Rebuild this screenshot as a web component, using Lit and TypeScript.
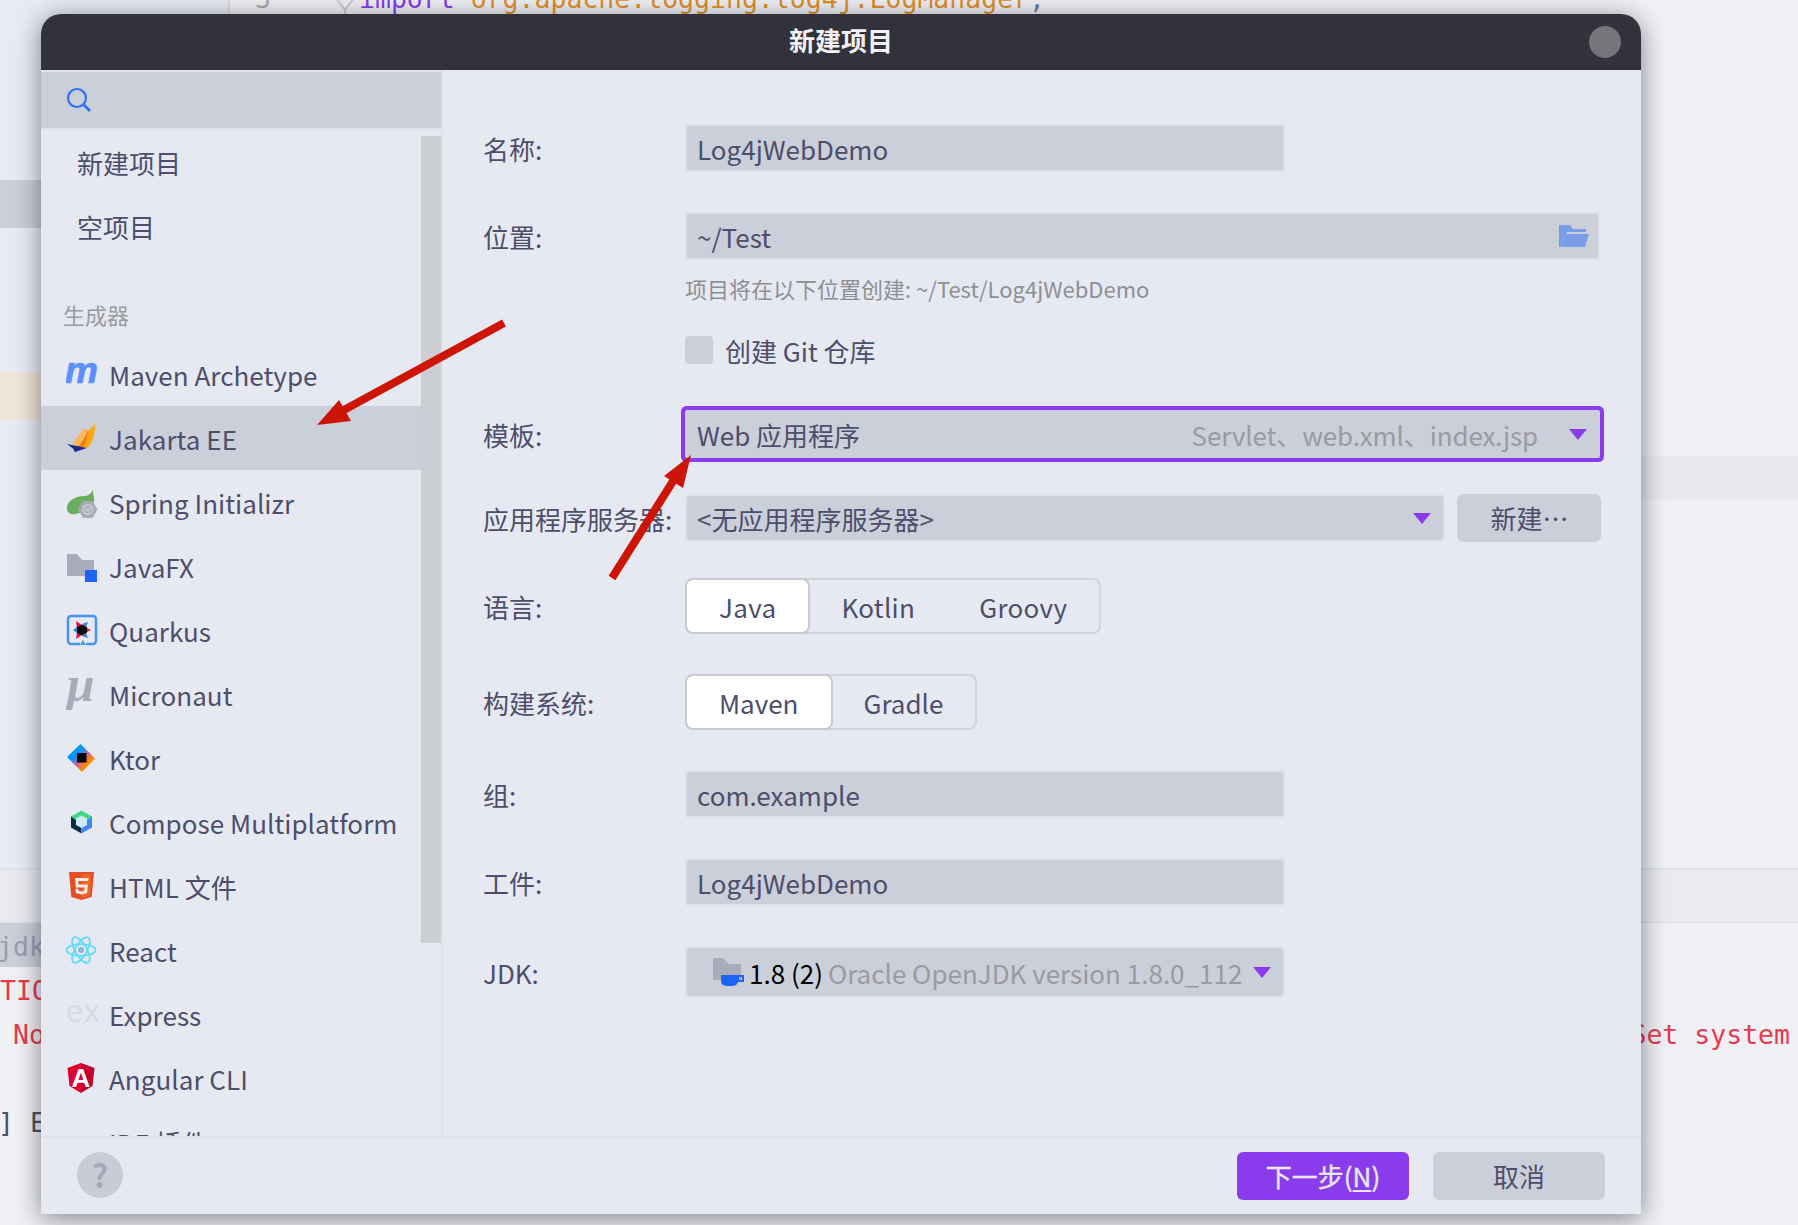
import { LitElement, css, html, svg } from 'lit'
import { customElement } from 'lit/decorators.js'

const icons: Record<string, unknown> = {
  maven: svg`<text x="-1" y="25" class="logo-m">m</text>`,
  jakarta: svg`
    <path d="M18 6L6 22l8 3 7-17z" fill="#f9b860"/>
    <path d="M21 8c-1 6-5 12-9 17l8 1c3-5 4-12 1-18z" fill="#f57c00"/>
    <path d="M29 2c0 10-2 19-8 24l-4-.5c5-6 4-15.500 5-16.500z" fill="#ffa90f"/>
    <path d="M1 22l20 4-12 4-2-3.500z" fill="#1b2a8c"/>`,
  spring: svg`
    <path d="M27 4c0 6 2.500 10 0 14l-13 9-5 1C4 29 0 26 1 21 2 14 10 10 18 10c4 0 7-2 9-6z" fill="#6aad5e"/>
    <path d="M17 15l9.500 0 5 8.500-5 8.500-9.500 0-5-8.500z" fill="#a9abb9"/>
    <circle cx="21.700" cy="23.500" r="5.500" fill="#c6c9d4"/>
    <circle cx="21.700" cy="23.500" r="3" fill="none" stroke="#a9abb9" stroke-width="1.200"/>
    <path d="M21.700 19.500v4" stroke="#a9abb9" stroke-width="1.200"/>`,
  javafx: svg`
    <path d="M1 4h10l5 6h12v16H1z" fill="#a9abbb"/>
    <rect x="19" y="20" width="12" height="12" fill="#1d63f7"/>`,
  quarkus: svg`
    <path d="M14 30H5a3 3 0 0 1-3-3V5a3 3 0 0 1 3-3h22a3 3 0 0 1 3 3v22a3 3 0 0 1-3 3h-7" fill="none" stroke="#4795ec" stroke-width="2.500"/>
    <path d="M14 31l3-5 3 5z" fill="#4795ec"/>
    <path d="M10 7l6 4-5 4zM25 16l-6-3v6zM10 25l1-7 5 3z" fill="#e8124c"/>
    <path d="M7 16l4-3v6zM22 8l-6 2 4 3zM22 24l-2-5-4 3z" fill="#2f7fe0"/>
    <path d="M16 10.500l5 2.800v5.400l-5 2.800-5-2.800v-5.400z" fill="#0c0c10"/>`,
  micronaut: svg`<text x="0" y="23" class="logo-mu">µ</text>`,
  ktor: svg`
    <defs><linearGradient id="ktor" x1="0.150" y1="0.150" x2="0.850" y2="0.850">
      <stop offset="0.300" stop-color="#0095ff"/><stop offset="0.550" stop-color="#c85fa8"/><stop offset="0.800" stop-color="#ff8a00"/>
    </linearGradient></defs>
    <path d="M14.500 2L29 16.500 16 30 1 15z" fill="url(#ktor)"/>
    <rect x="11" y="11" width="9.500" height="9.500" fill="#050507"/>`,
  compose: svg`
    <path d="M15.500 4.500L26 10.500 21 14H10L5 10.500z" fill="#3ddc84"/>
    <path d="M5 10.500L10 14 15.500 22 15.500 27.500 5 21.500z" fill="#083042"/>
    <path d="M26 10.500V21.500L15.500 27.500V22L21 14z" fill="#4285f4"/>
    <path d="M15.500 9.500L21 12.500V19L15.500 22 10 19V12.500z" fill="#cfeafb"/>`,
  html5: svg`
    <path d="M3 2h25l-2.300 25L15.500 30 5.300 27z" fill="#e44d26"/>
    <path d="M15.500 4v24l8.200-2.300L25.600 4z" fill="#f16529"/>
    <path d="M9 8h13.500l-.3 3H12.300l.3 3.500h9.300l-.8 8.500-5.600 1.600-5.600-1.600-.4-4.200h2.900l.2 2 2.900.8 2.900-.8.3-3.400H9.800z" fill="#fbeee8"/>`,
  react: svg`
    <g fill="none" stroke="#61dafb" stroke-width="1.800">
      <ellipse cx="15" cy="16" rx="14.500" ry="5.800"/>
      <ellipse cx="15" cy="16" rx="14.500" ry="5.800" transform="rotate(60 15 16)"/>
      <ellipse cx="15" cy="16" rx="14.500" ry="5.800" transform="rotate(120 15 16)"/>
    </g>
    <circle cx="15" cy="16" r="3" fill="#8db8d4"/>`,
  express: svg`<text x="0" y="24" class="logo-ex">ex</text>`,
  angular: svg`
    <path d="M15 1L1.500 6l2 18L15 31z" fill="#dd0031"/>
    <path d="M15 1l13.500 5-2 18L15 31z" fill="#c3002f"/>
    <text x="15" y="25" class="logo-a">A</text>`,
  plugin: svg`<path d="M3 24l8-6h6v-2h12v3h-5v4h5v9H3z" fill="#a9abbb"/>`,
}

const generators = [
  { icon: 'maven', name: 'Maven Archetype' },
  { icon: 'jakarta', name: 'Jakarta EE', selected: true },
  { icon: 'spring', name: 'Spring Initializr' },
  { icon: 'javafx', name: 'JavaFX' },
  { icon: 'quarkus', name: 'Quarkus' },
  { icon: 'micronaut', name: 'Micronaut' },
  { icon: 'ktor', name: 'Ktor' },
  { icon: 'compose', name: 'Compose Multiplatform' },
  { icon: 'html5', name: 'HTML 文件' },
  { icon: 'react', name: 'React' },
  { icon: 'express', name: 'Express' },
  { icon: 'angular', name: 'Angular CLI' },
  { icon: 'plugin', name: 'IDE 插件' },
]

const caret = html`<svg class="caret" width="18" height="11" viewBox="0 0 18 11"><path d="M0 0h18L9 11z" fill="#8a3ced"/></svg>`

@customElement('app-root')
export class AppRoot extends LitElement {
  static styles = css`
    :host {
      display: block;
      position: relative;
      width: 1798px;
      height: 1225px;
      overflow: hidden;
      background: #f0f1f5;
      font-family: "Noto Sans CJK SC", "Noto Sans", sans-serif;
      font-size: 26px;
      color: #4d4e6b;
    }

    /* IDE behind the dialog */
    .ide { display: flex; flex-direction: column; height: 100%; font-family: "DejaVu Sans Mono", monospace; font-size: 26.5px; }
    .ide-top { display: flex; height: 868px; }
    .ide-side { width: 228px; background: #e8ebf3; border-right: 2px solid #d9dbe3; display: flex; flex-direction: column; flex: none; }
    .side-sel { height: 48px; margin-top: 180px; background: #cbcfda; }
    .side-warm { height: 48px; margin-top: 144px; background: #efe6da; }
    .ide-editor { flex: 1; display: flex; flex-direction: column; }
    .code { display: flex; align-items: center; height: 44px; margin-top: -24px; white-space: pre; }
    .gutter {
      width: 129px;
      height: 44px;
      display: flex;
      justify-content: space-between;
      padding: 0 4px 0 25px;
      box-sizing: border-box;
      color: #a9abb8;
    }
    .gutter span { align-self: center; }
    .gutter svg { align-self: flex-end; }
    .kw { color: #8a3ced; }
    .str { color: #e0902a; }
    .semi { color: #6c7a9c; }
    .caret-line { height: 44px; margin-top: 436px; background: #e8eaef; }
    .ide-band { height: 55px; background: #e9ebf1; border-top: 2px solid #e1e3ea; border-bottom: 2px solid #e1e3ea; box-sizing: border-box; }
    .line { display: flex; justify-content: space-between; height: 44px; line-height: 48px; white-space: pre; }
    .jdk { width: 228px; background: #cbcfda; color: #9a9daf; text-indent: -3px; line-height: 48px; height: 44px; }
    .err { color: #e8394f; }
    .plain { color: #4d4e6b; }
    .bracket { margin-left: -2px; }
    .no { padding-left: 13px; }
    .set { padding-right: 8px; }

    /* dialog */
    .dialog {
      position: absolute;
      left: 41px;
      top: 14px;
      width: 1600px;
      height: 1200px;
      display: flex;
      flex-direction: column;
      background: #e6e9f1;
      border-radius: 20px 20px 0 0;
      box-shadow: 0 4px 26px rgba(20, 20, 30, .5);
    }
    .titlebar {
      height: 56px;
      flex: none;
      display: grid;
      grid-template-columns: 1fr auto 1fr;
      align-items: center;
      padding-right: 20px;
      box-sizing: border-box;
      background: #32323c;
      border-radius: 20px 20px 0 0;
    }
    .title { grid-column: 2; color: #f2f2f6; font-weight: 700; line-height: 52px; height: 56px; margin-left: 20px; }
    .close { justify-self: end; width: 32px; height: 32px; border-radius: 50%; background: #75757b; }
    .body { flex: 1; min-height: 0; display: flex; }

    /* left column */
    .side { width: 402px; flex: none; display: flex; flex-direction: column; border-right: 2px solid #dfe2ea; box-sizing: border-box; }
    .search {
      height: 60px;
      flex: none;
      display: flex;
      align-items: center;
      padding-left: 25px;
      box-sizing: border-box;
      background: #cbcfda;
      border-top: 2px solid #dfe2ea;
      border-bottom: 2px solid #dfe2ea;
    }
    .side-body { flex: 1; min-height: 0; display: flex; overflow: hidden; }
    .list { flex: 1; min-width: 0; padding-top: 1px; }
    .top-item { height: 64px; line-height: 64px; padding-left: 36px; }
    .section { height: 22px; line-height: 22px; font-size: 22px; color: #9a9a9f; padding: 44px 0 0 22px; margin-bottom: 17px; }
    .item { display: flex; align-items: center; height: 64px; padding-left: 25px; gap: 11px; white-space: nowrap; letter-spacing: .04px; }
    .item.selected { background: #cbcfda; }
    .item svg { flex: none; }
    .scroll { width: 20px; flex: none; }
    .thumb { height: 807px; margin-top: 6px; background: #cdced4; }
    .logo-m { font: italic 700 37px "Liberation Sans", sans-serif; fill: #5c8ffb; stroke: #5c8ffb; stroke-width: .7px; }
    .logo-mu { font: italic 700 50px "Liberation Serif", serif; fill: #a9abbb; }
    .logo-ex { font: 400 32px "Liberation Sans", sans-serif; fill: #d8dbe4; }
    .logo-a { font: 700 26px "Liberation Sans", sans-serif; fill: #fff; text-anchor: middle; }

    /* form */
    .form { flex: 1; min-width: 0; display: flex; flex-direction: column; padding: 54px 40px 0 40px; box-sizing: border-box; }
    .row { display: grid; grid-template-columns: 202px 1fr; align-items: center; }
    .label { white-space: nowrap; height: 48px; line-height: 50px; }
    .field {
      height: 48px;
      display: flex;
      align-items: center;
      padding: 0 9px 0 10px;
      box-sizing: border-box;
      background: #cbcfda;
      border: 2px solid #dfe2ea;
      white-space: nowrap;
    }
    .w600 { width: 600px; }
    .w915 { width: 915px; }
    .folder { margin-left: auto; }
    .mt46 { margin-top: 46px; }
    .mt40 { margin-top: 40px; }
    .mt36 { margin-top: 36px; }
    .hint { margin: 14px 0 0 202px; font-size: 22px; line-height: 28px; color: #8e8f93; white-space: nowrap; }
    .check { display: flex; align-items: center; gap: 12px; margin: 34px 0 0 202px; height: 28px; }
    .box { width: 28px; height: 28px; border-radius: 4px; background: #cbcfda; }
    .template {
      height: 48px;
      display: flex;
      align-items: center;
      padding: 0 13px 0 12px;
      box-sizing: border-box;
      background: #cbcfda;
      border-radius: 2px;
      box-shadow: 0 0 0 4px #8a3ced;
    }
    .sub { color: #9a9a9f; margin-left: auto; margin-right: 31px; white-space: nowrap; letter-spacing: -.13px; }
    .server { display: flex; gap: 12px; }
    .server .field { width: 760px; border-radius: 4px; padding-right: 12px; }
    .server .caret { margin-left: auto; }
    .new { width: 144px; height: 48px; line-height: 48px; padding-left: 1px; box-sizing: border-box; text-align: center; border-radius: 6px; background: #cbcfda; }
    .seg { display: inline-flex; justify-self: start; height: 56px; border: 2px solid #d0d3db; border-radius: 8px; box-sizing: border-box; }
    .seg span { padding: 0 32px; line-height: 54px; }
    .seg .on { margin: -2px 0 -2px -2px; background: #fff; border: 2px solid #c9cbd1; border-radius: 8px; }
    .lang span { letter-spacing: .3px; }
    .lang .on + span { padding-left: 31px; }
    .build .on { padding-right: 33px; }
    .build .on + span { padding-left: 30px; }
    .jdk-field { height: 52px; width: 600px; padding: 0 12px 0 26px; border-radius: 4px; }
    .jdk-field svg { flex: none; }
    .ver { color: #000; margin-left: 2px; }
    .vendor { color: #9a9a9f; margin-left: 5px; }
    .jdk-field .caret { margin-left: auto; }

    /* footer */
    .footer {
      height: 78px;
      flex: none;
      display: flex;
      padding: 14px 36px 0 36px;
      box-sizing: border-box;
      border-top: 2px solid #dfe2ea;
      gap: 24px;
    }
    .help {
      width: 46px;
      height: 46px;
      margin-right: auto;
      border-radius: 50%;
      background: #c8ccd7;
      color: #a5a8b5;
      font-size: 32px;
      font-weight: 700;
      line-height: 44px;
      text-align: center;
    }
    .btn { width: 172px; height: 48px; line-height: 48px; text-align: center; border-radius: 6px; background: #cbcfda; }
    .btn.primary { background: #8a3ced; color: #e6e9f1; -webkit-text-stroke: .4px #e6e9f1; }
    u { text-underline-offset: 3px; }

    .arrows { position: absolute; left: 0; top: 0; pointer-events: none; }
  `

  private renderBackdrop() {
    return html`
      <div class="ide">
        <div class="ide-top">
          <div class="ide-side">
            <div class="side-sel"></div>
            <div class="side-warm"></div>
          </div>
          <div class="ide-editor">
            <div class="code">
              <div class="gutter">
                <span>3</span>
                <svg width="20" height="36" viewBox="0 0 20 36" fill="none" stroke="#c9cbd3" stroke-width="2">
                  <path d="M1 14l4-6h10l4 6-9 12zM10 26v10"/>
                </svg>
              </div>
              <span class="kw">import </span><span class="str">org.apache.logging.log4j.LogManager</span><span class="semi">;</span>
            </div>
            <div class="caret-line"></div>
          </div>
        </div>
        <div class="ide-band"></div>
        <div class="line"><span class="jdk">jdk</span></div>
        <div class="line err"><span>TION</span></div>
        <div class="line err"><span class="no">No</span><span class="set">Set system</span></div>
        <div class="line"></div>
        <div class="line plain"><span class="bracket">] E</span></div>
      </div>
    `
  }

  private renderSidebar() {
    return html`
      <div class="side">
        <div class="search">
          <svg width="26" height="26" viewBox="0 0 26 26" fill="none" stroke="#2d72f0" stroke-width="2.200">
            <circle cx="11" cy="11" r="9"/><path d="M17.500 17.500L24 24" stroke-width="2.800"/>
          </svg>
        </div>
        <div class="side-body">
          <div class="list">
            <div class="top-item">新建项目</div>
            <div class="top-item">空项目</div>
            <div class="section">生成器</div>
            ${generators.map(g => html`
              <div class="item ${g.selected ? 'selected' : ''}">
                <svg width="32" height="32" viewBox="0 0 32 32">${icons[g.icon]}</svg>
                <span>${g.name}</span>
              </div>
            `)}
          </div>
          <div class="scroll"><div class="thumb"></div></div>
        </div>
      </div>
    `
  }

  private renderForm() {
    return html`
      <div class="form">
        <div class="row">
          <span class="label">名称:</span>
          <div class="field w600">Log4jWebDemo</div>
        </div>
        <div class="row mt40">
          <span class="label">位置:</span>
          <div class="field w915">~/Test
            <svg class="folder" width="30" height="22" viewBox="0 0 30 22">
              <path d="M0 0h11l3 4h13v3H8L1 22H0z" fill="#7a9de8"/>
              <path d="M7 9h23l-4 13H1z" fill="#7a9de8"/>
            </svg>
          </div>
        </div>
        <div class="hint">项目将在以下位置创建: ~/Test/Log4jWebDemo</div>
        <div class="check"><div class="box"></div><span>创建 Git 仓库</span></div>
        <div class="row mt46">
          <span class="label">模板:</span>
          <div class="template w915"><span>Web 应用程序</span><span class="sub">Servlet、web.xml、index.jsp</span>${caret}</div>
        </div>
        <div class="row mt36">
          <span class="label">应用程序服务器:</span>
          <div class="server">
            <div class="field">&lt;无应用程序服务器&gt;${caret}</div>
            <div class="new">新建…</div>
          </div>
        </div>
        <div class="row mt36">
          <span class="label">语言:</span>
          <div class="seg lang"><span class="on">Java</span><span>Kotlin</span><span>Groovy</span></div>
        </div>
        <div class="row mt40">
          <span class="label">构建系统:</span>
          <div class="seg build"><span class="on">Maven</span><span>Gradle</span></div>
        </div>
        <div class="row mt40">
          <span class="label">组:</span>
          <div class="field w600">com.example</div>
        </div>
        <div class="row mt40">
          <span class="label">工件:</span>
          <div class="field w600">Log4jWebDemo</div>
        </div>
        <div class="row mt40">
          <span class="label">JDK:</span>
          <div class="field jdk-field">
            <svg width="34" height="28" viewBox="0 0 34 28">
              <path d="M0 0h10l6 6h12v16H0z" fill="#a9abbb"/>
              <path d="M8 17h17v6a5 5 0 0 1-5 5h-7a5 5 0 0 1-5-5z" fill="#1d63f7"/>
              <path d="M25 18h5v5h-5z" fill="none" stroke="#1d63f7" stroke-width="2"/>
            </svg>
            <span class="ver">1.8 (2)</span><span class="vendor">Oracle OpenJDK version 1.8.0_112</span>${caret}
          </div>
        </div>
      </div>
    `
  }

  render() {
    return html`
      ${this.renderBackdrop()}
      <div class="dialog">
        <div class="titlebar"><span class="title">新建项目</span><div class="close"></div></div>
        <div class="body">
          ${this.renderSidebar()}
          ${this.renderForm()}
        </div>
        <div class="footer">
          <div class="help">?</div>
          <div class="btn primary">下一步(<u>N</u>)</div>
          <div class="btn">取消</div>
        </div>
      </div>
      <svg class="arrows" width="1798" height="1225" viewBox="0 0 1798 1225">
        <line x1="504" y1="323" x2="342" y2="411" stroke="#cc1505" stroke-width="8"/>
        <polygon points="317,425 339,400 351,421" fill="#cc1505"/>
        <line x1="612" y1="578" x2="675" y2="478" stroke="#cc1505" stroke-width="8"/>
        <polygon points="691,455 664,476 683,488" fill="#cc1505"/>
      </svg>
    `
  }
}
